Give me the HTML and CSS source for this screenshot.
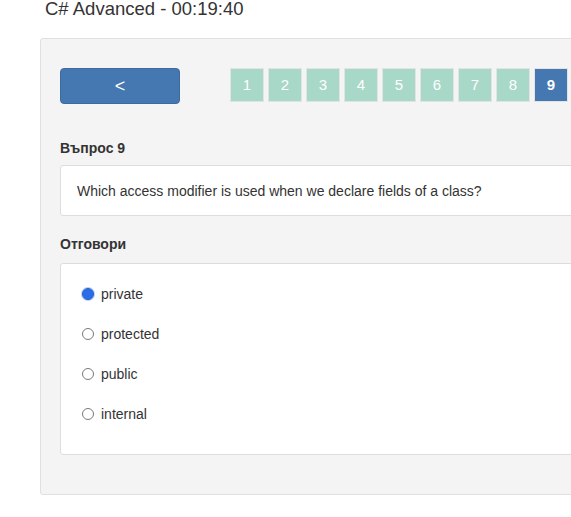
FILE: index.html
```html
<!DOCTYPE html>
<html>
<head>
<meta charset="utf-8">
<link rel="stylesheet" href="styles.css">
</head>
<body>
<h1 class="title">C# Advanced - 00:19:40</h1>
<div class="panel">
  <div class="nav-row">
    <button class="back-btn">&lt;</button>
    <div class="tiles">
      <span class="tile">1</span>
      <span class="tile">2</span>
      <span class="tile">3</span>
      <span class="tile">4</span>
      <span class="tile">5</span>
      <span class="tile">6</span>
      <span class="tile">7</span>
      <span class="tile">8</span>
      <span class="tile tile-active">9</span>
    </div>
  </div>
  <div class="label label-question">Въпрос 9</div>
  <div class="box question">Which access modifier is used when we declare fields of a class?</div>
  <div class="label label-answers">Отговори</div>
  <div class="box answers">
    <div class="option"><span class="radio radio-checked"></span><span>private</span></div>
    <div class="option"><span class="radio"></span><span>protected</span></div>
    <div class="option"><span class="radio"></span><span>public</span></div>
    <div class="option"><span class="radio"></span><span>internal</span></div>
  </div>
</div>
</body>
</html>
```
FILE: styles.css
```css
html, body {
  margin: 0;
  padding: 0;
  overflow: hidden;
  background: #ffffff;
}
body {
  font-family: "Liberation Sans", Arial, sans-serif;
  color: #333333;
  width: 571px;
  height: 517px;
}
.title {
  margin: 0;
  padding: 0 0 0 45px;
  font-size: 18.5px;
  font-weight: normal;
  line-height: 18px;
  height: 38px;
  color: #333;
}
.panel {
  margin-left: 40px;
  width: 600px;
  box-sizing: border-box;
  background: #f4f4f4;
  border: 1px solid #e0e0e0;
  border-radius: 3px;
  padding: 29px 0 39px 19px;
}
.nav-row {
  display: flex;
  align-items: flex-start;
  height: 36px;
}
.back-btn {
  width: 120px;
  height: 36px;
  box-sizing: border-box;
  background: #4577b1;
  border: 1px solid #3d6aa0;
  border-radius: 4px;
  color: #fff;
  font-family: "Liberation Sans", Arial, sans-serif;
  font-size: 18px;
  padding: 0;
  line-height: 34px;
}
.tiles {
  display: flex;
  gap: 4px;
  margin-left: 50px;
}
.tile {
  width: 34px;
  height: 34px;
  box-sizing: border-box;
  border: 1px solid #e3e3e3;
  background: #a8d8c8;
  color: #fff;
  font-size: 15px;
  line-height: 32px;
  text-align: center;
}
.tile-active {
  background: #4577b1;
  font-weight: bold;
}
.label {
  font-size: 14px;
  font-weight: bold;
  line-height: 20px;
  color: #333;
}
.label-question {
  margin-top: 34px;
  margin-bottom: 7px;
}
.label-answers {
  margin-top: 18px;
  margin-bottom: 9px;
}
.box {
  background: #fff;
  border: 1px solid #dddddd;
  border-radius: 3px;
  font-size: 14px;
  line-height: 20px;
}
.question {
  padding: 15px 16px 14px 16px;
}
.answers {
  padding: 20px 21px 10px 21px;
}
.option {
  display: flex;
  align-items: center;
  height: 20px;
  margin-bottom: 20px;
}
.radio {
  width: 12px;
  height: 12px;
  box-sizing: border-box;
  border: 1px solid #7a7a7a;
  border-radius: 50%;
  background: #fff;
  margin-right: 7px;
}
.radio-checked {
  background: #2b6de6;
  border: 1px solid #2a63cf;
  box-shadow: 0 0 0 1px #b9cff5;
}
```
